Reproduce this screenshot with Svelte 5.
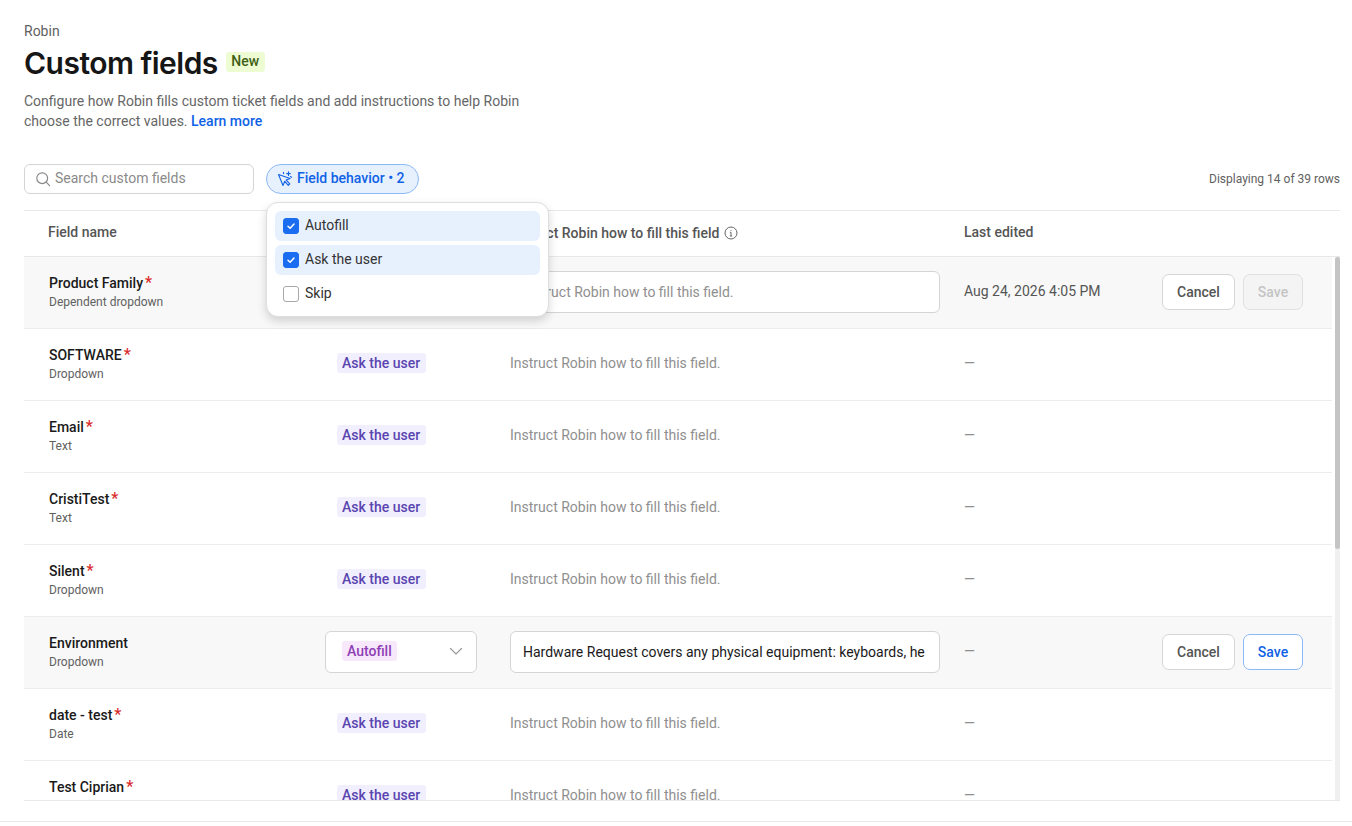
<script>
  const rows = [
    { name: "Product Family", type: "Dependent dropdown", required: true, editing: "empty", edited: "Aug 24, 2026 4:05 PM" },
    { name: "SOFTWARE", type: "Dropdown", required: true },
    { name: "Email", type: "Text", required: true },
    { name: "CristiTest", type: "Text", required: true },
    { name: "Silent", type: "Dropdown", required: true },
    { name: "Environment", type: "Dropdown", required: false, editing: "filled" },
    { name: "date - test", type: "Date", required: true },
    { name: "Test Ciprian", type: "Text", required: true }
  ];

  const placeholder = "Instruct Robin how to fill this field.";
  const hardware = "Hardware Request covers any physical equipment: keyboards, he";
  const options = [
    { label: "Autofill", checked: true },
    { label: "Ask the user", checked: true },
    { label: "Skip", checked: false }
  ];
</script>

<div class="page">
  <header class="head">
    <p class="crumb">Robin</p>
    <div class="title-row">
      <h1>Custom fields</h1>
      <span class="new">New</span>
    </div>
    <p class="desc">
      Configure how Robin fills custom ticket fields and add instructions to help Robin<br />
      choose the correct values. <a href="#learn">Learn more</a>
    </p>
  </header>

  <div class="toolbar">
    <label class="search">
      <svg width="16" height="16" viewBox="0 0 16 16" fill="none" stroke="#8a8a8a" stroke-width="1.2">
        <circle cx="7.2" cy="7.2" r="5.4" />
        <path d="M11.2 11.2 14.6 14.6" stroke-linecap="round" />
      </svg>
      <span class="up">Search custom fields</span>
    </label>

    <div class="filter-wrap">
      <button class="filter">
        <svg width="16" height="16" viewBox="0 0 16 16" fill="none" stroke="#0f62e6" stroke-width="1.1" stroke-linejoin="round" stroke-linecap="round">
          <path d="M1.5 3.5 6 14.5l1.7-4.2 3.6 4 1.5-1.5-3.7-3.8 4-1.6z" />
          <path d="M11.5 .8v3.6M9.7 2.6h3.6M6.5 1.2v1.4M13.4 5.6l1.2.6" />
        </svg>
        <span class="up">Field behavior • 2</span>
      </button>

      <div class="menu">
        {#each options as opt}
          <div class="opt" class:on={opt.checked}>
            <span class="box">
              {#if opt.checked}
                <svg width="10" height="10" viewBox="0 0 10 10" fill="none" stroke="#fff" stroke-width="1.5" stroke-linecap="round" stroke-linejoin="round">
                  <path d="M2 5.3 4.1 7.3 8 3" />
                </svg>
              {/if}
            </span>
            <span class="up">{opt.label}</span>
          </div>
        {/each}
      </div>
    </div>

    <span class="count">Displaying 14 of 39 rows</span>
  </div>

  <div class="table">
    <div class="cols thead">
      <span class="h-name">Field name</span>
      <span></span>
      <span class="h-inst">
        Instruct Robin how to fill this field
        <svg width="14" height="14" viewBox="0 0 14 14" fill="none" stroke="#666" stroke-width="1">
          <circle cx="7" cy="7" r="6" />
          <path d="M7 6.3v3.6M5.8 10h2.4M5.9 6.3H7" />
          <circle cx="7" cy="4.2" r=".5" fill="#666" stroke="none" />
        </svg>
      </span>
      <span>Last edited</span>
    </div>

    <div class="body">
      <div class="rows">
        {#each rows as row}
          <div class="cols row" class:active={row.editing}>
            <div class="name-cell">
              <div class="name">{row.name}{#if row.required}<span class="req">*</span>{/if}</div>
              <div class="type">{row.type}</div>
            </div>

            <div class="behavior">
              {#if row.editing === "filled"}
                <div class="select">
                  <span class="pill purple">Autofill</span>
                  <svg width="14" height="14" viewBox="0 0 14 14" fill="none" stroke="#999" stroke-width="1.1" stroke-linecap="round" stroke-linejoin="round">
                    <path d="M1.5 4.5 7 10l5.5-5.5" />
                  </svg>
                </div>
              {:else if !row.editing}
                <span class="pill">Ask the user</span>
              {/if}
            </div>

            <div class="inst">
              {#if row.editing === "filled"}
                <div class="input filled">{hardware}</div>
              {:else if row.editing === "empty"}
                <div class="input">{placeholder}</div>
              {:else}
                <span class="ph">{placeholder}</span>
              {/if}
            </div>

            <div class="edited" class:dim={!row.edited}>{row.edited || "—"}</div>

            <div class="actions">
              {#if row.editing}
                <button class="btn">Cancel</button>
                <button class="btn" class:save={row.editing === "filled"} class:off={row.editing === "empty"}>Save</button>
              {/if}
            </div>
          </div>
        {/each}
      </div>
      <div class="track"><div class="thumb"></div></div>
    </div>
  </div>

  <div class="foot"></div>
</div>

<style>
  :global(body) {
    margin: 0;
    background: #fff;
    font-family: Roboto, "Liberation Sans", sans-serif;
    color: #1a1a1a;
  }

  .page {
    height: 826px;
    box-sizing: border-box;
    display: flex;
    flex-direction: column;
    overflow: hidden;
  }

  .head {
    padding: 23px 24px 0;
  }

  .crumb {
    margin: 0;
    font-size: 14px;
    line-height: 16px;
    color: #616161;
  }

  .title-row {
    display: flex;
    align-items: flex-start;
    gap: 8px;
    margin-top: 4px;
  }

  h1 {
    margin: 0;
    font-family: Inter, sans-serif;
    font-size: 30px;
    line-height: 40px;
    font-weight: 600;
    letter-spacing: -0.52px;
    color: #161616;
  }

  .new {
    margin-top: 9px;
    height: 20px;
    padding: 0 5.5px;
    border-radius: 3px;
    background: #eefcd4;
    color: #3f5f14;
    font-size: 14px;
    font-weight: 500;
    line-height: 19px;
  }

  .desc {
    margin: 8px 0 0;
    font-size: 14px;
    line-height: 20px;
    color: #666;
  }

  .desc a {
    color: #0f62e6;
    font-weight: 500;
    text-decoration: none;
  }

  .toolbar {
    display: flex;
    align-items: center;
    margin-top: 33px;
    padding: 0 12px 0 24px;
    height: 30px;
    gap: 12px;
  }

  .up {
    margin-top: -2px;
  }

  .search {
    width: 230px;
    height: 30px;
    box-sizing: border-box;
    display: flex;
    align-items: center;
    gap: 4px;
    padding: 0 10px;
    border: 1px solid #d4d4d4;
    border-radius: 6px;
    font-size: 14px;
    color: #8a8a8a;
  }

  .filter-wrap {
    position: relative;
  }

  .filter {
    height: 30px;
    display: flex;
    align-items: center;
    gap: 4px;
    padding: 0 13px 0 10px;
    border: 1px solid #8cb9f8;
    border-radius: 15px;
    background: #e7f1fe;
    color: #0f62e6;
    font-family: inherit;
    font-size: 14px;
    font-weight: 500;
  }

  .menu {
    position: absolute;
    top: 38px;
    left: 0;
    z-index: 5;
    width: 283px;
    box-sizing: border-box;
    padding: 8px 8px 7px;
    background: #fff;
    border: 1px solid #dedede;
    border-radius: 12px;
    box-shadow: 0 4px 10px rgba(0, 0, 0, 0.16);
    display: flex;
    flex-direction: column;
    gap: 4px;
  }

  .opt {
    height: 30px;
    display: flex;
    align-items: center;
    gap: 6px;
    padding: 0 8px;
    border-radius: 6px;
    font-size: 14px;
    color: #333;
  }

  .opt.on {
    background: #e7f1fe;
  }

  .box {
    width: 16px;
    height: 16px;
    box-sizing: border-box;
    border: 1px solid #a8a8a8;
    border-radius: 3px;
    background: #fff;
    display: flex;
    align-items: center;
    justify-content: center;
  }

  .on .box {
    background: #1a6df0;
    border-color: #1a6df0;
  }

  .count {
    margin-left: auto;
    font-size: 12px;
    color: #616161;
  }

  .table {
    margin: 16px 12px 0 24px;
    border-top: 1px solid #e8e8e8;
    border-bottom: 1px solid #e8e8e8;
  }

  .cols {
    display: grid;
    grid-template-columns: 301px 185px 454px 198px 1fr;
    align-items: center;
  }

  .thead {
    height: 42px;
    padding-bottom: 3px;
    font-size: 14px;
    font-weight: 500;
    color: #555;
    border-bottom: 1px solid #e8e8e8;
    grid-template-columns: 301px 185px 454px 1fr;
  }

  .h-name {
    padding-left: 24px;
  }

  .h-inst {
    display: flex;
    align-items: center;
    gap: 5px;
    margin-top: 2px;
  }

  .body {
    height: 543px;
    display: flex;
    overflow: hidden;
  }

  .rows {
    width: 1308px;
    flex: none;
  }

  .row {
    height: 70px;
    padding-bottom: 1px;
    border-bottom: 1px solid #ececec;
    font-size: 14px;
  }

  .row.active {
    background: #f8f8f8;
  }

  .name-cell {
    padding: 0 0 0 25px;
    margin-top: -2px;
  }

  .name {
    font-weight: 500;
    line-height: 20px;
    color: #1a1a1a;
  }

  .req {
    margin-left: 2px;
    color: #d92c2c;
    font-size: 16px;
  }

  .type {
    font-size: 12px;
    line-height: 16px;
    margin-top: 1px;
    color: #616161;
  }

  .behavior {
    padding-left: 12px;
    margin-top: -2px;
  }

  .pill {
    display: inline-block;
    height: 20px;
    padding: 0 5.5px 0 5px;
    border-radius: 3px;
    background: #f1effd;
    color: #5a45b0;
    font-weight: 500;
    line-height: 20px;
  }

  .pill.purple {
    background: #f7e9fb;
    color: #8f3fb5;
  }

  .select {
    width: 152px;
    height: 42px;
    margin: 2px 0 0 -12px;
    box-sizing: border-box;
    display: flex;
    align-items: center;
    justify-content: space-between;
    padding: 0 13px 2px 16px;
    background: #fff;
    border: 1px solid #d4d4d4;
    border-radius: 6px;
  }

  .inst {
    padding-right: 24px;
  }

  .ph {
    display: block;
    margin-top: -3px;
    color: #8f8f8f;
  }

  .input {
    width: 430px;
    height: 42px;
    box-sizing: border-box;
    padding: 0 12px;
    background: #fff;
    border: 1px solid #d4d4d4;
    border-radius: 6px;
    line-height: 40px;
    white-space: nowrap;
    overflow: hidden;
    color: #8f8f8f;
  }

  .input.filled {
    color: #1a1a1a;
  }

  .edited {
    color: #555;
    margin-top: -2px;
  }

  .edited.dim {
    color: #8f8f8f;
    margin-top: -3px;
  }

  .actions {
    display: flex;
    gap: 8px;
    padding-left: 0;
  }

  .btn {
    height: 36px;
    padding: 0 14px;
    background: #fff;
    border: 1px solid #d6d6d6;
    border-radius: 7px;
    color: #555;
    font-family: inherit;
    font-size: 14px;
    font-weight: 500;
  }

  .btn.save {
    border-color: #8cb9f8;
    color: #0f62e6;
  }

  .btn.off {
    background: #f4f4f4;
    color: #c4c4c4;
    border-color: #e0e0e0;
  }

  .track {
    width: 5px;
    margin-left: 3px;
    background: #f0f0f0;
    flex: none;
  }

  .thumb {
    height: 292px;
    background: #c4c4c4;
    border-radius: 3px;
  }

  .foot {
    margin-top: 20px;
    border-top: 1px solid #e8e8e8;
  }
</style>
